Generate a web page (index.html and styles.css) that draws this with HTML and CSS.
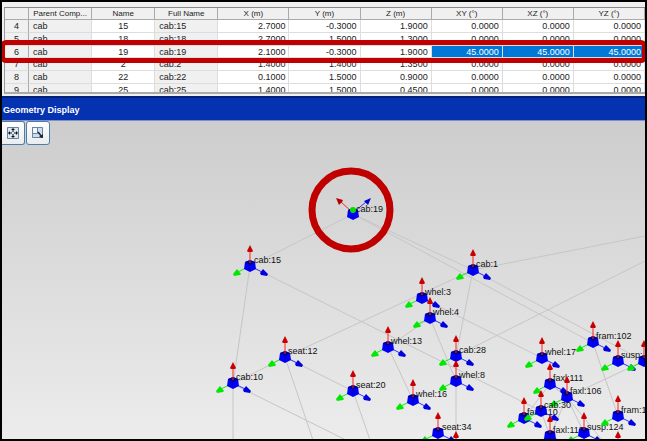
FILE: index.html
```html
<!DOCTYPE html>
<html lang="en">
<head>
<meta charset="UTF-8" />
<meta name="viewport" content="width=device-width, initial-scale=1" />
<title>Geometry Display</title>
<link rel="stylesheet" href="styles.css">
</head>
<body>

<main class="window">
  <section class="grid-panel">
    <div class="grid-clip">
      <table class="grid">
        <colgroup>
          <col class="col-index"><col class="col-text"><col class="col-text"><col class="col-text">
          <col class="col-num"><col class="col-num"><col class="col-num"><col class="col-num"><col class="col-num"><col class="col-num">
        </colgroup>
        <thead>
          <tr><th></th><th>Parent Comp...</th><th>Name</th><th>Full Name</th><th>X (m)</th><th>Y (m)</th><th>Z (m)</th><th>XY (°)</th><th>XZ (°)</th><th>YZ (°)</th></tr>
        </thead>
        <tbody>
          <tr><th>4</th><td class="locked">cab</td><td class="name">15</td><td class="locked">cab:15</td><td>2.7000</td><td>-0.3000</td><td>1.9000</td><td>0.0000</td><td>0.0000</td><td>0.0000</td></tr>
          <tr><th>5</th><td class="locked">cab</td><td class="name">18</td><td class="locked">cab:18</td><td>2.7000</td><td>1.5000</td><td>1.3000</td><td>0.0000</td><td>0.0000</td><td>0.0000</td></tr>
          <tr><th>6</th><td class="locked">cab</td><td class="name">19</td><td class="locked">cab:19</td><td>2.1000</td><td>-0.3000</td><td>1.9000</td><td class="selected">45.0000</td><td class="selected">45.0000</td><td class="selected">45.0000</td></tr>
          <tr><th>7</th><td class="locked">cab</td><td class="name">2</td><td class="locked">cab:2</td><td>1.4000</td><td>1.4000</td><td>1.3500</td><td>0.0000</td><td>0.0000</td><td>0.0000</td></tr>
          <tr><th>8</th><td class="locked">cab</td><td class="name">22</td><td class="locked">cab:22</td><td>0.1000</td><td>1.5000</td><td>0.9000</td><td>0.0000</td><td>0.0000</td><td>0.0000</td></tr>
          <tr><th>9</th><td class="locked">cab</td><td class="name">25</td><td class="locked">cab:25</td><td>1.4000</td><td>1.5000</td><td>0.4500</td><td>0.0000</td><td>0.0000</td><td>0.0000</td></tr>
        </tbody>
      </table>
    </div>
    <div class="row-marker"></div>
  </section>

  <h1 class="title-bar">Geometry Display</h1>

  <section class="view">
    <svg class="scene" aria-label="Geometry">
      <defs>
        <g id="cube">
          <path fill="#0000f8" d="M0-6 5-4 6 3 0 6-6 3-5-4Z"/>
          <path fill="#000080" d="M0-6 5-4 0-1-5-4Z"/>
          <path fill="none" stroke="#0000c4" d="M0-1V5"/>
        </g>
        <g id="node">
          <path stroke="#1e1" d="M-4 2-12 6"/>
          <path stroke="#33f" d="M4 2 12 6"/>
          <use href="#cube"/>
          <path stroke="#f22" d="M0-3V-15"/>
          <path fill="#c80000" d="M0-21 3-15 2-14H-2L-3-15Z"/>
          <path fill="#00e800" d="M-13 3-9 8-10 9-16 10-17 8Z"/>
          <path fill="#0000e0" d="M13 3 18 8 17 10 11 9 10 7Z"/>
        </g>
      </defs>

      <g transform="translate(-2 -121)">
        <!-- connections -->
        <g class="links">
          <path d="M353 214 250 266M353 214 593 343M353 214 473 270 644 361M473 270 645 236"/>
          <path d="M645 261 456 356M473 270 456 356M473 270 285 357 233 384"/>
          <path d="M250 266 233 384V440M250 266 541 411M233 384 346 440"/>
          <path d="M285 357 313 440M285 357 353 391 370 440"/>
          <path d="M422 298 542 358M430 318 388 347 413 400M430 318 456 381V440"/>
          <path d="M593 343 618 416M644 361 567 397 524 418"/>
          <path d="M550 384 524 418M550 384 567 397 584 433M567 397 550 436M541 411 550 436M567 397 602 440M550 384 567 397"/>
        </g>

        <!-- axes triads -->
        <use href="#node" x="250" y="266"/><text x="254" y="263">cab:15</text>
        <use href="#node" x="473" y="270"/><text x="476" y="267">cab:1</text>
        <use href="#node" x="422" y="298"/><text x="425" y="295">whel:3</text>
        <use href="#node" x="430" y="318"/><text x="433" y="315">whel:4</text>
        <use href="#node" x="388" y="347"/><text x="391" y="344">whel:13</text>
        <use href="#node" x="285" y="357"/><text x="288" y="354">seat:12</text>
        <use href="#node" x="233" y="383"/><text x="236" y="380">cab:10</text>
        <use href="#node" x="353" y="391"/><text x="356" y="388">seat:20</text>
        <use href="#node" x="413" y="400"/><text x="416" y="397">whel:16</text>
        <use href="#node" x="456" y="356"/><text x="459" y="353">cab:28</text>
        <use href="#node" x="456" y="381"/><text x="459" y="378">whel:8</text>
        <use href="#node" x="542" y="358"/><text x="545" y="355">whel:17</text>
        <use href="#node" x="593" y="342"/><text x="596" y="339">fram:102</text>
        <use href="#node" x="618" y="361"/><text x="621" y="358">susp:</text>
        <use href="#node" x="644" y="361"/>
        <use href="#node" x="550" y="384"/><text x="553" y="381">faxl:111</text>
        <use href="#node" x="567" y="397"/><text x="570" y="394">faxl:106</text>
        <use href="#node" x="524" y="418"/><text x="527" y="415">faxl:110</text>
        <use href="#node" x="541" y="411"/><text x="544" y="408">cab:30</text>
        <use href="#node" x="550" y="436"/><text x="553" y="433">faxl:113</text>
        <use href="#node" x="584" y="433"/><text x="587" y="430">susp:124</text>
        <use href="#node" x="618" y="416"/><text x="621" y="413">fram:1</text>
        <use href="#node" x="438" y="433"/><text x="442" y="430">seat:34</text>
        <use href="#node" x="456" y="452"/>
        <use href="#node" x="618" y="452"/>

        <!-- rotated point -->
        <path stroke="#f22" d="M351 211 341 202"/>
        <path stroke="#33f" d="M355 211 366 202"/>
        <path fill="#b40000" d="M336 198 343 200 342 202 339 205Z"/>
        <path fill="#0000d0" d="M371 198 368 205 364 201Z"/>
        <use href="#cube" x="353" y="214"/>
        <circle cx="353" cy="210" r="3" fill="#00e000"/>
        <text x="356" y="212">cab:19</text>
        <circle class="ring" cx="351" cy="210" r="39"/>
      </g>
    </svg>

    <div class="toolbar">
      <button class="tool tool-first" aria-label="Fit view">
        <svg width="12" height="12" viewBox="0 0 12 12">
          <path fill="#dce8f4" stroke="#6483a5" d="M.5.5h11v11H.5Z"/>
          <path fill="#111" d="M6 1 8 3H4ZM6 11 4 9H8ZM1 6 3 4V8ZM11 6 9 8V4Z"/>
          <path stroke="#111" d="M6 3V5M6 7V9M3 6H5M7 6H9"/>
        </svg>
      </button>
      <button class="tool" aria-label="Zoom window">
        <svg width="12" height="12" viewBox="0 0 12 12">
          <path fill="#cfdeed" stroke="#6483a5" d="M.5.5h10v10H.5Z"/>
          <path fill="#f3f8fc" stroke="#6483a5" d="M.5.5h5v6h-5Z"/>
          <path stroke="#223" stroke-width="1.5" d="M6 5 10 10"/>
          <path fill="#223" d="M11 11V7L7 10Z"/>
        </svg>
      </button>
    </div>
  </section>
</main>

</body>
</html>
```
FILE: styles.css
```css
* {
  box-sizing: border-box;
}
body {
  margin: 0;
  background: #fff;
  font-family: 'Liberation Sans', Arial, sans-serif;
  font-size: 9px;
  color: #222;
}
.window {
  display: flex;
  flex-direction: column;
  height: 100vh;
  border: 2px solid #000;
  overflow: hidden;
}

/* data grid */
.grid-panel {
  position: relative;
  padding: 5px 0 2px 2px;
  background: #f0f0f0;
}
.grid-clip {
  height: 87px;
  overflow: hidden;
  border-top: 1px solid #888;
  border-left: 1px solid #999;
  border-bottom: 2px solid #aaa;
}
.grid {
  width: 100%;
  height: 89px;
  table-layout: fixed;
  border-collapse: separate;
  border-spacing: 0;
}
.col-index {
  width: 24px;
}
.col-text {
  width: 63px;
}
.col-num {
  width: 71px;
}
.grid th,
.grid td {
  height: 12px;
  padding: 0 3px;
  line-height: 10px;
  white-space: nowrap;
  overflow: hidden;
  border-right: 1px solid #ddd;
  border-bottom: 1px solid #ddd;
}
.grid th {
  padding: 0;
  font-weight: normal;
  text-align: center;
  background: #f0f0f0;
  border-right-color: #aaa;
}
.grid thead th {
  font-size: 8px;
  border-bottom-color: #aaa;
}
.grid td {
  text-align: right;
  background: #fff;
}
.grid td.locked {
  padding-left: 4px;
  text-align: left;
  background: #f0f0f0;
}
.grid td.name {
  text-align: center;
}
.grid td.selected {
  color: #fff;
  background: #0078d7;
}
.row-marker {
  position: absolute;
  z-index: 2;
  top: 38px;
  left: -2px;
  right: -2px;
  height: 23px;
  border: 5px solid #c00000;
  border-radius: 6px;
}

/* geometry view */
.title-bar {
  margin: 0;
  padding: 0 1px;
  height: 25px;
  line-height: 24px;
  font-size: 9px;
  font-weight: bold;
  color: #fff;
  background: #0432b0;
  border-top: 2px solid #04217a;
  border-bottom: 1px solid #8090c0;
}
.view {
  position: relative;
  flex: 1;
  min-height: 0;
  background: linear-gradient(#cdcdcd, #ececec);
}
.scene {
  display: block;
  width: 100%;
  height: 100%;
}
.scene text {
  font-size: 9px;
  fill: #111;
}
.links {
  fill: none;
  stroke: #c6c6c6;
}
.ring {
  fill: none;
  stroke: #c00000;
  stroke-width: 7px;
}
.toolbar {
  position: absolute;
  top: 0;
  left: 0;
  display: flex;
  gap: 1px;
}
.tool {
  display: flex;
  align-items: center;
  justify-content: center;
  width: 24px;
  height: 24px;
  padding: 0;
  background: linear-gradient(#fff, #e9edf0);
  border: 1px solid #4f7da8;
  border-radius: 3px;
}
.tool-first {
  width: 23px;
  border-left: 0;
  border-radius: 0 3px 3px 0;
}
```
